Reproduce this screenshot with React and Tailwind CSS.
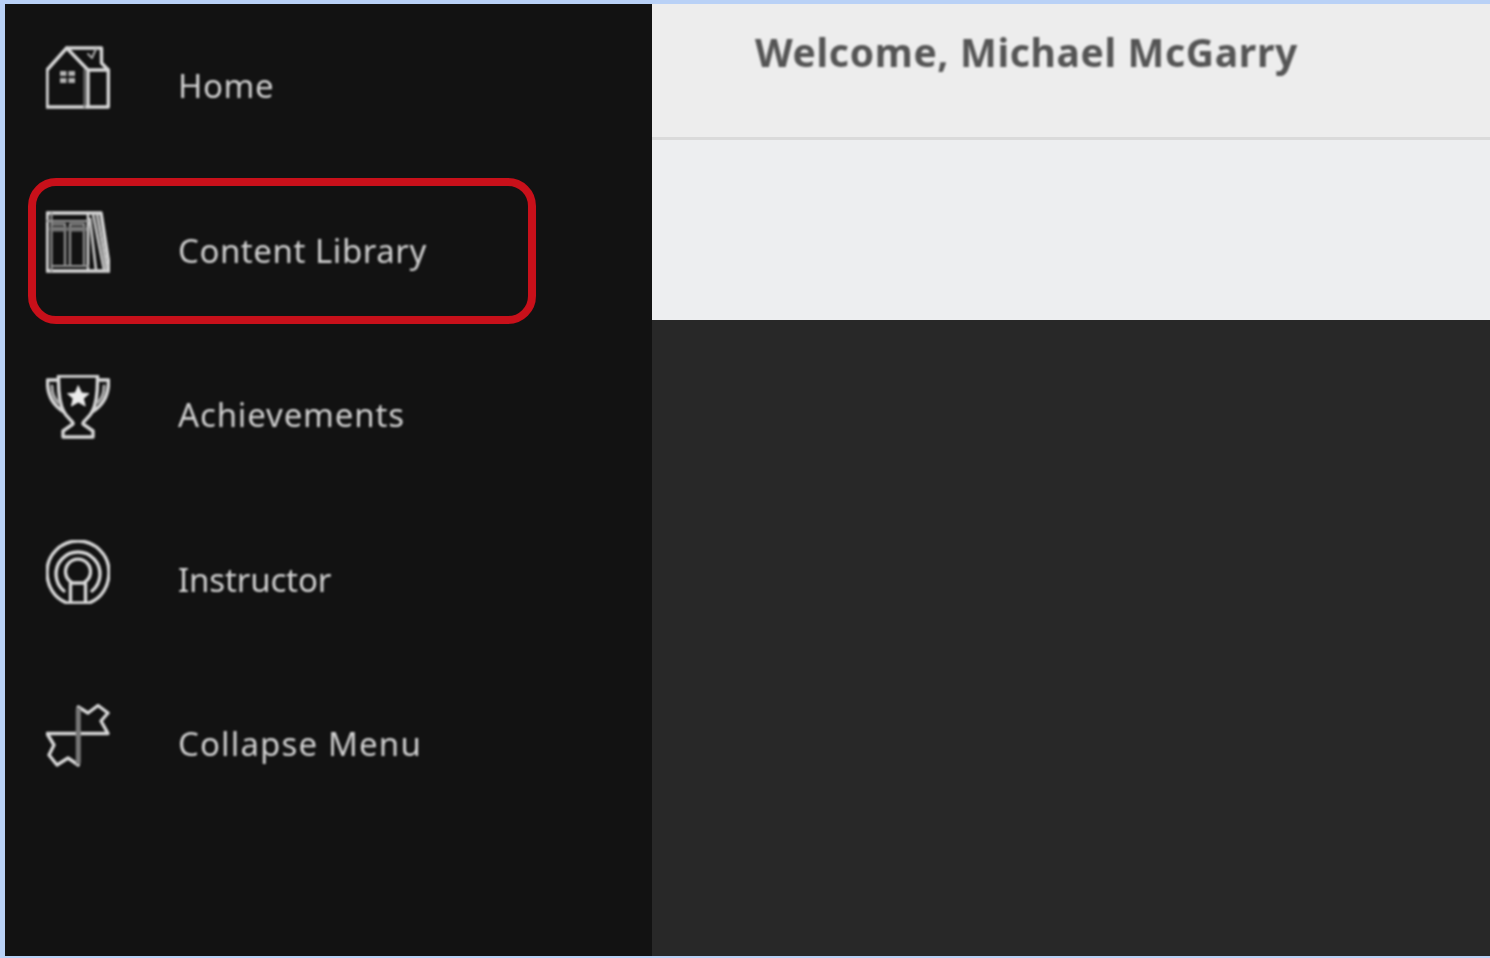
const S = { fill: "none", stroke: "#d8d8d8", strokeWidth: 3.4, strokeLinejoin: "round", strokeLinecap: "round" };

function Icon({ children }) {
  return (
    <svg viewBox="0 0 64 64" className="w-16 h-16 shrink-0 blur-[0.9px]" {...S}>
      {children}
    </svg>
  );
}

const HomeIcon = () => (
  <Icon>
    <path d="M1 24 L20.7 2 H55.5 V17 L62.3 24 V61 H1 Z" />
    <path d="M20.7 2 L42 24 V61 M42 24 H62.3" />
    <path d="M42 8 L46 12 L50 3" strokeWidth="2" stroke="#aaa" />
    <path d="M38.5 24 V61" strokeWidth="2" stroke="#777" />
    <path d="M14 25 H20.5 V30 H14 Z M22.5 25 H29 V30 H22.5 Z M14 32 H20.5 V37 H14 Z M22.5 32 H29 V37 H22.5 Z" fill="#b4b4b4" stroke="none" />
  </Icon>
);

const BookIcon = () => (
  <Icon>
    <path d="M1 2 H55 L64 60 H1 Z" />
    <path d="M42 2 V60" strokeWidth="2.4" />
    <path d="M5.5 2 V60 M1 10 H42 M5.5 55 H42" strokeWidth="2" stroke="#999" />
    <path d="M6 13 H19 V55 M24 13 H38 V55 M24 13 V55" strokeWidth="2.4" stroke="#8c8c8c" />
    <path d="M6 18 H19 M24 18 H38" strokeWidth="5" stroke="#777" />
    <path d="M47 3 L58 59 M51 3 L61 59 M44 8 L50 59" strokeWidth="2.6" stroke="#c8c8c8" />
  </Icon>
);

const TrophyIcon = () => (
  <Icon>
    <path d="M12.5 1 H51.5 V5 H62.5 C63 20 58 30 46 37 C43 43 38 45 37 48 V49 L47 56 V62 H17 V56 L27 49 V48 C26 45 21 43 18 37 C6 30 1 20 1.5 5 H12.5 Z" />
    <path d="M12.5 5 C12.5 20 14 30 18 37 M51.5 5 C51.5 20 50 30 46 37" />
    <path d="M6 11 C6 18 8 24 13 28 M58 11 C58 18 56 24 51 28" strokeWidth="3" stroke="#aaa" />
    <path d="M32.3 11 L35.6 18 L43 18.6 L37.4 23.6 L39.2 31 L32.3 27 L25.4 31 L27.2 23.6 L21.6 18.6 L29 18 Z" fill="#ececec" stroke="#ececec" strokeWidth="1" />
  </Icon>
);

const InstructorIcon = () => (
  <Icon>
    <path d="M21 63 C8 58 1 46 1 32 A31 31 0 0 1 63 32 C63 46 56 58 43 63 Z" />
    <path d="M18 51 A22 22 0 1 1 46 51" />
    <path d="M25 42 A12.5 12.5 0 1 1 39 42" />
    <path d="M24.5 43 H39.5 M24.5 43 V63 M39.5 43 V63" />
  </Icon>
);

const CollapseIcon = () => (
  <Icon>
    <path d="M32.3 3 V61 L22 54 L11 61 L3 51 L8 41 L1 29.5 H62 L55 17 L62 9 L52 1.5 L42 9 Z" />
    <path d="M32.3 6 V58" strokeWidth="5" stroke="#777" />
  </Icon>
);

const items = [
  ["Home", HomeIcon, "tracking-[0.55px]"],
  ["Content Library", BookIcon, "tracking-[0.55px]"],
  ["Achievements", TrophyIcon, "tracking-[0.85px]"],
  ["Instructor", InstructorIcon, "tracking-[-0.15px]"],
  ["Collapse Menu", CollapseIcon, "tracking-[1.15px]"],
];

export default function App() {
  return (
    <div
      className="w-[1490px] h-[958px] overflow-hidden bg-[#b9d1f6] pt-[4px] pl-[5px] pb-[2px] flex"
      style={{ fontFamily: '"Noto Sans", sans-serif' }}
    >
      <aside className="relative w-[647px] h-full bg-[#121212] pl-[41px] pt-[42px]">
        {items.map(([label, Ico, track]) => (
          <div key={label} className="flex items-start gap-[68px] h-[164.5px]">
            <Ico />
            <span className={`mt-[20px] h-10 leading-10 text-[33px] text-[#d2d2d2] whitespace-nowrap blur-[0.8px] ${track}`}>
              {label}
            </span>
          </div>
        ))}
        <div className="absolute left-[23px] top-[174px] w-[508px] h-[146px] rounded-[28px] border-[8px] border-[#c8101a] blur-[0.5px]" />
      </aside>
      <main className="flex-1 flex flex-col bg-[#282828]">
        <header className="h-[136px] bg-[#ededed] border-b-[3px] border-[#dadada] pl-[103px] pt-[23px]">
          <h1 className="h-[50px] leading-[50px] text-[39px] font-bold tracking-[0.67px] text-[#555555] whitespace-nowrap blur-[0.8px]">
            Welcome, Michael McGarry
          </h1>
        </header>
        <div className="h-[180px] bg-[#edeef0]" />
      </main>
    </div>
  );
}
